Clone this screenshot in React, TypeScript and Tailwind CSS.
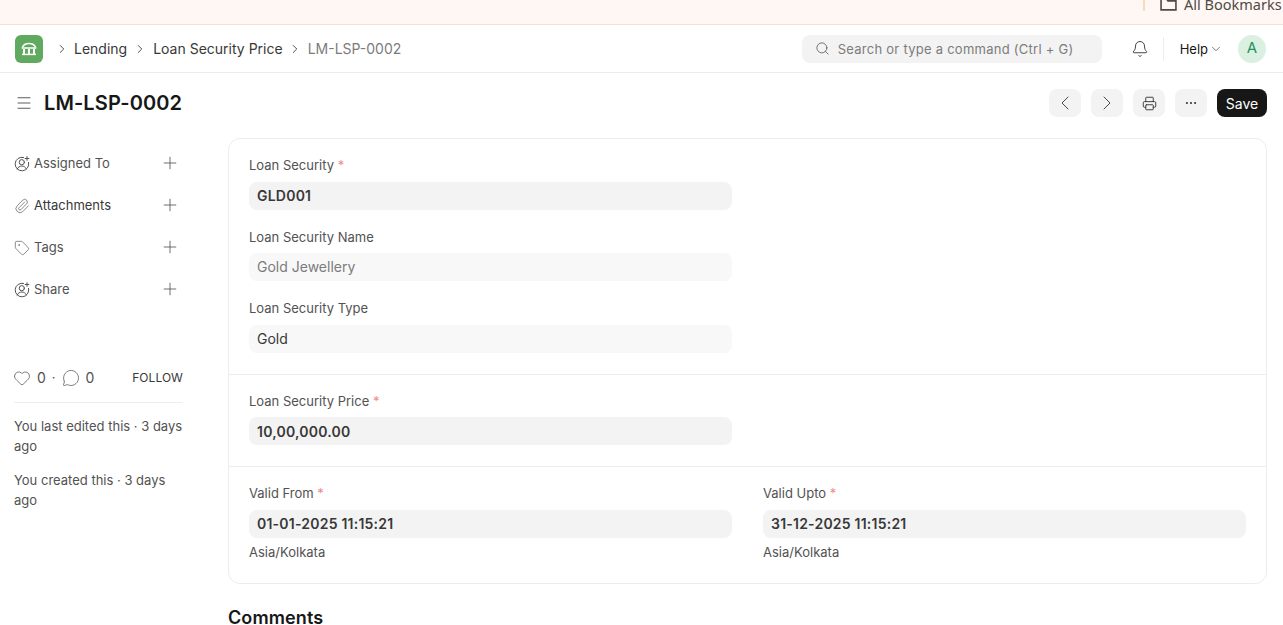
import { Bell, ChevronDown, ChevronLeft, ChevronRight, Ellipsis, Heart, MessageCircle, Paperclip, Plus, Printer, Search, Tag, Menu } from 'lucide-react';
import type { ReactNode } from 'react';

function AssignIcon() {
  return (
    <svg viewBox="0 0 16 16" fill="none" stroke="currentColor" strokeWidth="1" strokeLinecap="round" className="w-[16px] h-[16px] shrink-0">
      <path d="M9.6 1.4A6.8 6.8 0 1 0 14.6 6.4" />
      <circle cx="7.8" cy="6.2" r="2.6" />
      <path d="M3.2 13c.8-1.9 2.6-3 4.6-3s3.8 1.1 4.6 3" />
      <path d="M13 .6v3.8M11.1 2.5h3.8" />
    </svg>
  );
}

function SideRow({ icon, label, dark }: { icon: ReactNode; label: string; dark?: boolean }) {
  return (
    <div className="flex items-center h-[42px]">
      <span className="w-[20px] text-[#525252]">{icon}</span>
      <span className={dark ? 'text-[13px] text-[#383838]' : 'text-[13px] text-[#525252]'}>{label}</span>
      <Plus className="w-[20px] h-[20px] ml-auto mr-[3px] -mt-[2px] text-[#525252]" strokeWidth={1} />
    </div>
  );
}

function Field({ label, value, required, muted, bold = true }: { label: string; value: string; required?: boolean; muted?: boolean; bold?: boolean }) {
  return (
    <div>
      <div className="text-[13px] leading-[16px] text-[#525252]">
        {label}
        {required && <span className="text-[#f08a8a]"> *</span>}
      </div>
      <div
        className={
          muted
            ? 'mt-[8.5px] h-[28px] rounded-lg bg-[#f8f8f8] px-2 pb-[1px] flex items-center text-[14px] text-[#7c7c7c]'
            : bold
              ? 'mt-[8.5px] h-[28px] rounded-lg bg-[#f3f3f3] px-2 flex items-center text-[14px] font-semibold tracking-[0.22px] text-[#383838]'
              : 'mt-[8.5px] h-[28px] rounded-lg bg-[#f8f8f8] px-2 flex items-center text-[14px] font-normal text-[#383838]'
        }
      >
        {value}
      </div>
    </div>
  );
}

function IconBtn({ children }: { children: ReactNode }) {
  return <div className="w-[32px] h-[28px] rounded-lg bg-[#f3f3f3] flex items-center justify-center text-[#383838]">{children}</div>;
}

export default function App() {
  return (
    <div className="h-[625px] overflow-hidden bg-white font-['Inter',sans-serif] text-[#171717]">
      <div className="h-[25px] bg-[#fff7f3] border-b border-[#f8e0cc] flex justify-end overflow-hidden">
        <div className="w-[2px] h-[11px] bg-[#f7dcc0] mr-[15px]" />
        <svg viewBox="0 0 16 16" fill="none" stroke="#4f4a46" strokeWidth="1.5" className="w-[17px] h-[17px] -mt-[5px] mr-[7px]">
          <path d="M1 3.5h5l1.5 2H15v8.5H1z" />
        </svg>
        <span className="font-['Noto_Sans',sans-serif] text-[14.5px] leading-[16px] -mt-[4px] text-[#4f4a46] whitespace-nowrap w-[99px]">All Bookmarks</span>
      </div>

      <header className="h-[48px] border-b border-[#ededed] flex items-center pl-[15px] pr-[17px]">
        <div className="w-[28px] h-[28px] rounded-md bg-[#5faa5f] flex items-center justify-center">
          <svg viewBox="0 0 20 20" fill="none" stroke="white" strokeWidth="1.5" className="w-[20px] h-[20px]">
            <path d="M3.400 8.400C4.400 5.600 7 4.400 10 4.400s5.600 1.200 6.600 4" />
            <path d="M2.600 9h14.800" />
            <path d="M5 10v5M10 10v5M15 10v5" strokeWidth="2" />
            <path d="M3 15.400h14" />
          </svg>
        </div>
        <nav className="flex items-center text-[14px] text-[#383838]">
          <ChevronRight className="w-[14px] h-[14px] ml-[12px] mr-[5px] text-[#383838]" strokeWidth={1.5} />
          <span>Lending</span>
          <ChevronRight className="w-[14px] h-[14px] mx-[6px] text-[#383838]" strokeWidth={1.5} />
          <span>Loan Security Price</span>
          <ChevronRight className="w-[14px] h-[14px] mx-[5.500px] text-[#383838]" strokeWidth={1.5} />
          <span className="text-[#7c7c7c]">LM-LSP-0002</span>
        </nav>
        <div className="ml-auto w-[300px] h-[28px] rounded-lg bg-[#f3f3f3] flex items-center pl-[13px] text-[13px] text-[#7c7c7c] tracking-[0.26px]">
          <Search className="w-[15px] h-[15px] mr-[8px] text-[#525252]" strokeWidth={1.25} />
          <span className="pt-[2px]">Search or type a command (Ctrl + G)</span>
        </div>
        <Bell className="w-[18px] h-[18px] ml-[29px] text-[#383838]" strokeWidth={1.25} />
        <div className="w-px h-[24px] bg-[#ededed] ml-[14px]" />
        <span className="ml-[16px] pt-[2px] text-[13px] text-[#171717]">Help</span>
        <ChevronDown className="w-[14px] h-[14px] ml-[1px] text-[#525252]" strokeWidth={1.25} />
        <div className="ml-[15px] w-[28px] h-[28px] rounded-full bg-[#daf0e1] flex items-center justify-center text-[15px] text-[#278f5e]">A</div>
      </header>

      <div className="h-[65px] flex items-center pl-[15px] pr-[16px] pb-[5px]">
        <Menu className="w-[18px] h-[18px] text-[#525252]" strokeWidth={1.25} />
        <h1 className="ml-[11px] text-[20px] font-semibold tracking-[0.1px] text-[#171717]">LM-LSP-0002</h1>
        <div className="ml-auto flex items-center gap-[10px]">
          <IconBtn><ChevronLeft className="w-[24px] h-[24px]" strokeWidth={0.9} /></IconBtn>
          <IconBtn><ChevronRight className="w-[24px] h-[24px]" strokeWidth={0.9} /></IconBtn>
          <IconBtn><Printer className="w-[15px] h-[15px]" strokeWidth={1.5} /></IconBtn>
          <IconBtn><Ellipsis className="w-[14px] h-[14px]" strokeWidth={1.75} /></IconBtn>
          <div className="h-[28px] w-[50px] rounded-lg bg-[#171717] text-white text-[14px] flex items-center justify-center">Save</div>
        </div>
      </div>

      <div className="flex items-start pl-[14px] pr-[16px]">
        <aside className="w-[169px] shrink-0 mr-[45px]">
          <div className="pt-[5px]">
            <SideRow icon={<AssignIcon />} label="Assigned To" />
            <SideRow icon={<Paperclip className="w-[16px] h-[16px]" strokeWidth={1} />} label="Attachments" dark />
            <SideRow icon={<Tag className="w-[16px] h-[16px]" strokeWidth={1} />} label="Tags" />
            <SideRow icon={<AssignIcon />} label="Share" />
          </div>
          <div className="mt-[56px] pb-[14px] flex items-center border-b border-[#ededed] text-[13px] text-[#525252]">
            <Heart className="w-[18px] h-[18px] -ml-[1px]" strokeWidth={1} />
            <span className="ml-[6px] text-[14px]">0</span>
            <span className="mx-[6px]">·</span>
            <MessageCircle className="w-[18px] h-[18px]" strokeWidth={1} />
            <span className="ml-[6px] text-[14px]">0</span>
            <span className="ml-auto text-[12px] tracking-[0.05px] text-[#383838]">FOLLOW</span>
          </div>
          <p className="mt-[13px] text-[13px] leading-[20px] text-[#525252]">You last edited this · 3 days ago</p>
          <p className="mt-[14px] text-[13px] leading-[20px] text-[#525252]">You created this · 3 days ago</p>
        </aside>

        <main className="flex-1 min-w-0">
          <div className="border border-[#ededed] rounded-xl">
            <section className="px-[20px] pt-[18px] pb-[21.5px] border-b border-[#ededed]">
              <div className="w-[483px] flex flex-col gap-[19px]">
                <Field label="Loan Security" value="GLD001" required />
                <Field label="Loan Security Name" value="Gold Jewellery" muted />
                <Field label="Loan Security Type" value="Gold" bold={false} />
              </div>
            </section>
            <section className="px-[20px] pt-[17.5px] pb-[21px] border-b border-[#ededed]">
              <div className="w-[483px]">
                <Field label="Loan Security Price" value="10,00,000.00" required />
              </div>
            </section>
            <section className="px-[20px] pt-[18px] pb-[23.5px] grid grid-cols-2 gap-x-[31px]">
              <div>
                <Field label="Valid From" value="01-01-2025 11:15:21" required />
                <div className="mt-[6px] text-[13px] leading-[16px] text-[#525252]">Asia/Kolkata</div>
              </div>
              <div>
                <Field label="Valid Upto" value="31-12-2025 11:15:21" required />
                <div className="mt-[6px] text-[13px] leading-[16px] text-[#525252]">Asia/Kolkata</div>
              </div>
            </section>
          </div>
          <h2 className="mt-[20px] text-[18px] font-semibold tracking-[0.1px] text-[#171717]">Comments</h2>
        </main>
      </div>
    </div>
  );
}
